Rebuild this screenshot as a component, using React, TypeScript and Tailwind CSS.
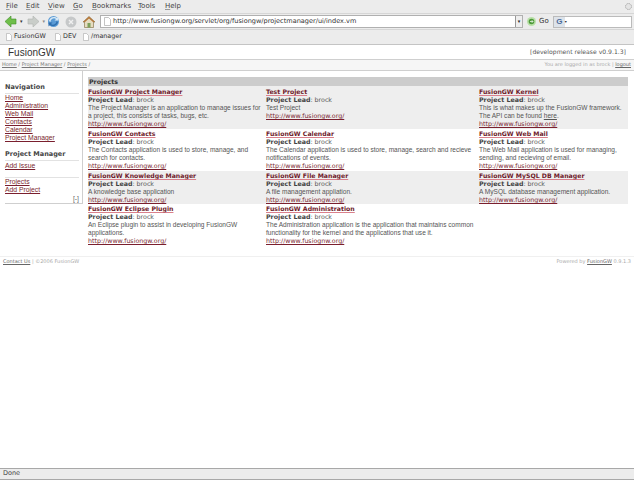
import React from "react";

const font = "font-['DejaVu_Sans',sans-serif]";

const navLinks = ["Home", "Administration", "Web Mail", "Contacts", "Calendar", "Project Manager"];

type Project = { name: string; desc: React.ReactNode; url?: string };

const rows: { key: string; cls: string; items: (Project | null)[] }[] = [
  {
    key: "r1",
    cls: "h-[43px] pt-[2px] bg-[#eeeeee]",
    items: [
      { name: "FusionGW Project Manager", desc: "The Project Manager is an application to manage issues for a project, this consists of tasks, bugs, etc." },
      { name: "Test Project", desc: "Test Project" },
      {
        name: "FusionGW Kernel",
        desc: (
          <>
            This is what makes up the FusionGW framework. The API can be found <span className="underline">here</span>.
          </>
        ),
      },
    ],
  },
  {
    key: "r2",
    cls: "h-[42px] pt-[1px] bg-white",
    items: [
      { name: "FusionGW Contacts", desc: "The Contacts application is used to store, manage, and search for contacts." },
      { name: "FusionGW Calendar", desc: "The Calendar application is used to store, manage, search and recieve notifications of events." },
      { name: "FusionGW Web Mail", desc: "The Web Mail application is used for managing, sending, and recieving of email." },
    ],
  },
  {
    key: "r3",
    cls: "h-[33px] pt-[1px] bg-[#eeeeee]",
    items: [
      { name: "FusionGW Knowledge Manager", desc: "A knowledge base application" },
      { name: "FusionGW File Manager", desc: "A file management appliation." },
      { name: "FusionGW MySQL DB Manager", desc: "A MySQL database management application." },
    ],
  },
  {
    key: "r4",
    cls: "h-[42px] pt-[1px] bg-white",
    items: [
      { name: "FusionGW Eclipse Plugin", desc: "An Eclipse plugin to assist in developing FusionGW applications." },
      {
        name: "FusionGW Administration",
        desc: "The Administration application is the application that maintains common functionality for the kernel and the applications that use it.",
        url: "http://www.fusiognw.org/",
      },
      null,
    ],
  },
];

function ProjectCell({ p }: { p: Project | null }) {
  if (!p) return <div />;
  return (
    <div className="pr-[1px]">
      <div className="text-[6.2px] font-bold text-[#6e1a2a] underline decoration-[#d9808c]">{p.name}</div>
      <div className="text-[6.3px] text-[#555]">
        <span className="font-bold text-[#444]">Project Lead</span>: brock
      </div>
      <div className="font-['Liberation_Sans',sans-serif] text-[6.55px] text-[#555]">{p.desc}</div>
      <div className="text-[6.3px] text-[#7a1f2e] underline">{p.url ?? "http://www.fusiongw.org/"}</div>
    </div>
  );
}

function MenuBar() {
  const items = ["File", "Edit", "View", "Go", "Bookmarks", "Tools", "Help"];
  const gaps = ["w-[20px]", "w-[22px]", "w-[25px]", "w-[19px]", "w-[46px]", "w-[27px]", "w-[20px]"];
  return (
    <div className="flex h-[13px] items-center bg-[#ececec] pl-[6px] pr-[1px] text-[7px] text-[#444]">
      {items.map((m, i) => (
        <span key={m} className={gaps[i]}>
          <span className="underline decoration-[#999]">{m[0]}</span>
          {m.slice(1)}
        </span>
      ))}
      <svg className="ml-auto" width="9" height="9" viewBox="0 0 9 9">
        <circle cx="4.5" cy="4.5" r="3" fill="#e4e4e4" stroke="#aaa" strokeWidth="1" strokeDasharray="1.5 0.8" />
      </svg>
    </div>
  );
}

function NavBar() {
  return (
    <div className="flex h-[16px] items-center border-t border-[#d6d6d6] bg-[#ececec] pl-[4px]">
      <svg width="13" height="13" viewBox="0 0 13 13">
        <path d="M1 6.5 L7 1 V4 H12 V9 H7 V12 Z" fill="#6fbf4a" stroke="#3f8f2a" strokeWidth="0.6" />
      </svg>
      <span className="ml-[3px] text-[5px] text-[#333]">▾</span>
      <svg className="ml-[4px]" width="13" height="13" viewBox="0 0 13 13">
        <path d="M12 6.5 L6 1 V4 H1 V9 H6 V12 Z" fill="#c9cdc9" stroke="#aeb2ae" strokeWidth="0.6" />
      </svg>
      <span className="ml-[3px] text-[5px] text-[#888]">▾</span>
      <svg className="ml-[2px]" width="13" height="13" viewBox="0 0 13 13">
        <circle cx="6.5" cy="6.5" r="5.5" fill="#5b9bd5" />
        <path d="M2 6 A5 5 0 0 1 10 3 L11.5 1.5 V5.5 H7.5 L9 4 A3.5 3.5 0 0 0 3.5 7 Z" fill="#d6e8f6" />
        <path d="M11 7 A5 5 0 0 1 3 10 L1.5 11.5 V7.5 H5.5 L4 9 A3.5 3.5 0 0 0 9.5 6 Z" fill="#2f6fae" />
      </svg>
      <svg className="ml-[5px]" width="12" height="12" viewBox="0 0 12 12">
        <circle cx="6" cy="6" r="5.5" fill="#c6c8c9" />
        <path d="M4 4 L8 8 M8 4 L4 8" stroke="#f0f0f0" strokeWidth="1.4" />
      </svg>
      <svg className="ml-[5px]" width="14" height="14" viewBox="0 0 14 14">
        <path d="M1 7 L7 1.5 L13 7 H11.5 V12.5 H2.5 V7 Z" fill="#e6dcc0" stroke="#8c7a50" strokeWidth="0.7" />
        <path d="M7 1.5 L13 7 H11 L7 3.5 L3 7 H1 Z" fill="#b5763a" />
        <rect x="5.5" y="8" width="3" height="4.5" fill="#7da05a" />
      </svg>
      <div className="ml-[4px] flex h-[13px] w-[423px] items-center border border-[#b0b0b0] bg-white pl-[3px]">
        <svg width="7" height="9" viewBox="0 0 7 9">
          <path d="M0.5 0.5 H4.5 L6.5 2.5 V8.5 H0.5 Z" fill="#fff" stroke="#aaa" strokeWidth="0.7" />
        </svg>
        <span className="ml-[2px] whitespace-nowrap text-[6.55px] text-[#333]">
          http://www.fusiongw.org/servlet/org/fusiongw/projectmanager/ui/index.vm
        </span>
        <span className="ml-auto flex h-full w-[7px] items-center justify-center border-l border-[#999] bg-[#eee] text-[5px] text-[#222]">▾</span>
      </div>
      <svg className="ml-[4px]" width="9" height="9" viewBox="0 0 9 9">
        <circle cx="4.5" cy="4.5" r="4.5" fill="#b9e0a8" />
        <circle cx="4.5" cy="4.5" r="2.8" fill="#4e9a3a" />
        <path d="M3 4.5 H6 M4.8 3.2 L6 4.5 L4.8 5.8" stroke="#fff" strokeWidth="0.7" fill="none" />
      </svg>
      <span className="ml-[3px] text-[7px] text-[#333]">Go</span>
      <div className="ml-[4px] flex h-[12px] w-[79px] items-center border border-[#bbb] bg-white">
        <div className="flex h-full w-[11px] items-center justify-center bg-[#dde3ea]">
          <span className="font-['Liberation_Sans',sans-serif] text-[8px] leading-none font-bold text-[#4a6a9a]">G</span>
        </div>
        <span className="text-[4px] text-[#333]">▾</span>
      </div>
    </div>
  );
}

function Bookmarks() {
  const marks = [
    { t: "FusionGW", w: "w-[49px]" },
    { t: "DEV", w: "w-[28px]" },
    { t: "/manager", w: "w-[42px]" },
  ];
  return (
    <div className="flex h-[15px] items-center border-t border-[#d6d6d6] bg-[#ececec] pl-[6px] text-[6.4px] text-[#333]">
      {marks.map((m) => (
        <div key={m.t} className={`flex items-center gap-[2px] ${m.w}`}>
          <svg width="6" height="8" viewBox="0 0 6 8">
            <path d="M0.5 0.5 H3.5 L5.5 2.5 V7.5 H0.5 Z" fill="#fff" stroke="#aaa" strokeWidth="0.6" />
          </svg>
          {m.t}
        </div>
      ))}
    </div>
  );
}

function Sidebar() {
  return (
    <div className="ml-[5px] h-[133px] w-[78px] border-r border-b border-[#cfcfcf] pt-[12px] pr-[3px] font-['Liberation_Sans',sans-serif] text-[6.8px] leading-[8px] text-[#7a1f2e]">
      <div className={`border-b border-[#e2e2e2] pb-[1px] text-[6.5px] leading-[9px] font-bold text-[#444] ${font}`}>Navigation</div>
      <div>
        {navLinks.map((l) => (
          <div key={l} className="underline">
            {l}
          </div>
        ))}
      </div>
      <div className={`mt-[8px] border-b border-[#e2e2e2] pb-[1px] text-[6.5px] leading-[9px] font-bold text-[#444] ${font}`}>Project Manager</div>
      <div className="mt-[1px] underline">Add Issue</div>
      <div className="mt-[7px] border-t border-[#e2e2e2]">
        <div className="underline">Projects</div>
        <div className="underline">Add Project</div>
      </div>
      <div className="pt-[1px] text-right text-[#666]">[-]</div>
    </div>
  );
}

export default function App() {
  return (
    <div className={`flex h-[480px] w-[634px] flex-col overflow-hidden bg-white ${font}`}>
      <MenuBar />
      <NavBar />
      <Bookmarks />
      <div className="flex h-[15px] items-center justify-between border-t border-[#c4c4c4] pr-[8px] pl-[8px]">
        <span className="font-['Liberation_Sans',sans-serif] text-[10px] text-[#333]">FusionGW</span>
        <span className="text-[6.1px] text-[#555]">[development release v0.9.1.3]</span>
      </div>
      <div className="flex h-[12px] items-center justify-between border-y border-[#cfcfcf] bg-[#f6f6f6] pr-[3px] pl-[2px] text-[5px] text-[#777]">
        <span>
          <span className="underline">Home</span> / <span className="underline">Project Manager</span> / <span className="underline">Projects</span> /
        </span>
        <span className="text-[#aaa]">
          You are logged in as brock | <span className="text-[#666] underline">logout</span>
        </span>
      </div>
      <div className="flex h-[185px] items-start">
        <Sidebar />
        <div className="mt-[6px] ml-[5px] w-[540px] leading-[8px]">
          <div className="flex h-[9px] items-center bg-[#cccccc] pl-[1px] text-[6.3px] font-bold text-[#333]">Projects</div>
          {rows.map((r) => (
            <div key={r.key} className={`grid grid-cols-[178px_213px_149px] ${r.cls}`}>
              {r.items.map((p, i) => (
                <ProjectCell key={i} p={p} />
              ))}
            </div>
          ))}
        </div>
      </div>
      <div className="flex h-[11px] items-center justify-between border-t border-[#f0f0f0] pr-[3px] pl-[3px] text-[5px] text-[#aaa]">
        <span>
          <span className="text-[#666] underline">Contact Us</span> | ©2006 FusionGW
        </span>
        <span>
          Powered by <span className="text-[#666] underline">FusionGW</span> 0.9.1.3
        </span>
      </div>
      <div className="flex-1" />
      <div className="flex h-[12px] items-center border-y border-[#a8a8a8] bg-[#ececec] pl-[3px] text-[6.5px] text-[#444]">Done</div>
    </div>
  );
}
